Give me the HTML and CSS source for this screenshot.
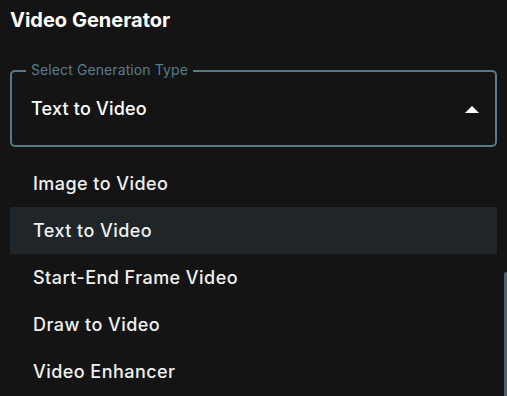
FILE: index.html
```html
<!DOCTYPE html>
<html lang="en">
<head>
  <meta charset="UTF-8">
  <meta name="viewport" content="width=device-width, initial-scale=1">
  <title>Video Generator</title>
  <link rel="stylesheet" href="styles.css">
</head>
<body>
  <div class="panel">
    <h1 class="titulo">Video Generator</h1>

    <div class="selector">
      <span class="etiqueta">Select Generation Type</span>
      <span class="valor">Text to Video</span>
      <svg class="flecha" width="14" height="8" viewBox="0 0 14 8">
        <polygon points="0,8 7,1 14,8" fill="#fff"/>
      </svg>
    </div>

    <ul class="menu">
      <li>Image to Video</li>
      <li class="activo">Text to Video</li>
      <li>Start-End Frame Video</li>
      <li>Draw to Video</li>
      <li>Video Enhancer</li>
    </ul>
  </div>
  <div class="scroll"></div>
</body>
</html>
```

FILE: styles.css
```css
body {
  background: #141414;
  font-family: 'Inter', 'Noto Sans', sans-serif;
  color: #fff;
  margin: 0;
  height: 396px;
  overflow: hidden;
  position: relative;
}

.panel {
  padding: 8px 10px 0 10px;
}

.titulo {
  font-size: 20px;
  font-weight: 700;
  line-height: 24px;
  margin: 0 0 38px 0;
}

.selector {
  position: relative;
  border: 2px solid #5a7886;
  border-radius: 5px;
  height: 73px;
  display: flex;
  align-items: center;
  padding: 0 16px 0 19px;
}

.etiqueta {
  position: absolute;
  top: -11px;
  left: 14px;
  padding: 0 5px;
  background: #141414;
  color: #5b7b8b;
  font-size: 14px;
  letter-spacing: 0.1px;
  line-height: 18px;
}

.valor {
  flex: 1;
  font-size: 18px;
  font-weight: 500;
  letter-spacing: 0.2px;
}

.menu {
  list-style: none;
  margin: 13px 0 0 0;
  padding: 0;
}

.menu li {
  height: 47px;
  line-height: 47px;
  padding-left: 23px;
  font-size: 18px;
  font-weight: 500;
  letter-spacing: 0.45px;
  color: #f0f0f0;
}

.menu li.activo {
  background: #1f2529;
}

.scroll {
  position: absolute;
  right: 0;
  top: 272px;
  width: 3px;
  height: 130px;
  background: #4d616c;
  border-radius: 2px 0 0 0;
}
```
